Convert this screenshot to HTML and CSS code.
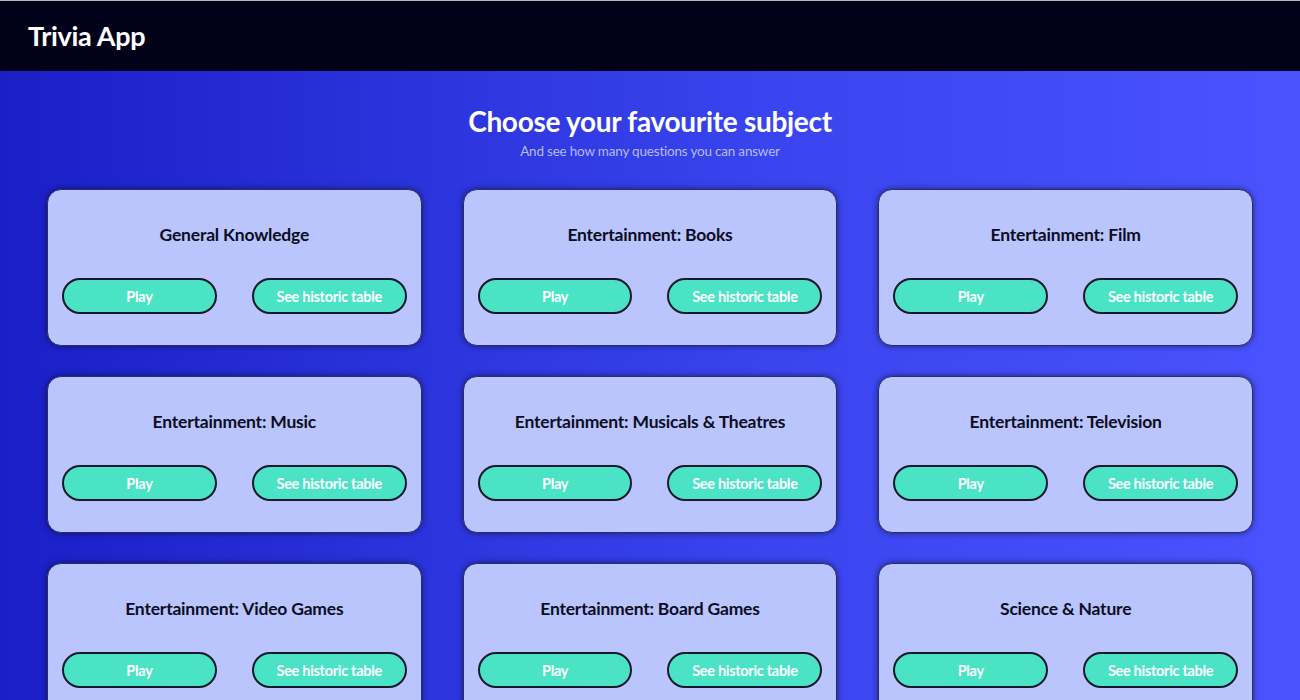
FILE: index.html
```html
<!DOCTYPE html>
<html lang="en">
<head>
<meta charset="utf-8">
<title>Trivia App</title>
<link rel="stylesheet" href="styles.css">
</head>
<body>
<header class="topbar">
  <div class="brand">Trivia App</div>
</header>
<main class="main">
  <section class="intro">
    <h1 class="intro-title">Choose your favourite subject</h1>
    <p class="intro-sub">And see how many questions you can answer</p>
  </section>
  <section class="grid">
    <div class="card"><h2 class="card-title">General Knowledge</h2><div class="actions"><button class="btn">Play</button><button class="btn">See historic table</button></div></div>
    <div class="card"><h2 class="card-title">Entertainment: Books</h2><div class="actions"><button class="btn">Play</button><button class="btn">See historic table</button></div></div>
    <div class="card"><h2 class="card-title">Entertainment: Film</h2><div class="actions"><button class="btn">Play</button><button class="btn">See historic table</button></div></div>
    <div class="card"><h2 class="card-title">Entertainment: Music</h2><div class="actions"><button class="btn">Play</button><button class="btn">See historic table</button></div></div>
    <div class="card"><h2 class="card-title">Entertainment: Musicals &amp; Theatres</h2><div class="actions"><button class="btn">Play</button><button class="btn">See historic table</button></div></div>
    <div class="card"><h2 class="card-title">Entertainment: Television</h2><div class="actions"><button class="btn">Play</button><button class="btn">See historic table</button></div></div>
    <div class="card"><h2 class="card-title">Entertainment: Video Games</h2><div class="actions"><button class="btn">Play</button><button class="btn">See historic table</button></div></div>
    <div class="card"><h2 class="card-title">Entertainment: Board Games</h2><div class="actions"><button class="btn">Play</button><button class="btn">See historic table</button></div></div>
    <div class="card"><h2 class="card-title">Science &amp; Nature</h2><div class="actions"><button class="btn">Play</button><button class="btn">See historic table</button></div></div>
  </section>
</main>
</body>
</html>
```
FILE: styles.css
```css
* { box-sizing: border-box; }
html, body { margin: 0; padding: 0; }
body {
  font-family: Lato, "Liberation Sans", sans-serif;
  background: linear-gradient(90deg, #1a1fc6 0%, #3a45ef 60%, #4a53fd 100%);
  min-height: 100vh;
}
.topbar {
  height: 71px;
  background: #01021a;
  border-top: 1px solid #b5b5b5;
  display: flex;
  align-items: center;
  padding-left: 28px;
}
.brand {
  color: #ffffff;
  font-weight: 700;
  font-size: 27px;
  letter-spacing: -0.3px;
  margin-top: -2px;
}
.main {
  padding: 0 47px;
}
.intro {
  text-align: center;
  padding-top: 33px;
}
.intro-title {
  margin: 0;
  color: #ffffff;
  font-size: 28px;
  font-weight: 700;
  line-height: 34px;
  letter-spacing: -0.3px;
}
.intro-sub {
  margin: 4px 0 0;
  color: #b3bdf8;
  font-size: 13.5px;
  line-height: 18px;
  letter-spacing: -0.2px;
}
.grid {
  margin-top: 29px;
  display: grid;
  grid-template-columns: repeat(3, 1fr);
  column-gap: 41px;
  row-gap: 30px;
}
.card {
  background: #b9c5fc;
  border: 1px solid #2a2d6a;
  border-radius: 14px;
  box-shadow: 0 0 6px rgba(0, 0, 20, 0.55);
  padding: 33px 14px 31px;
  display: flex;
  flex-direction: column;
  align-items: stretch;
}
.card-title {
  margin: 0;
  text-align: center;
  color: #0c0d22;
  font-size: 17.5px;
  font-weight: 700;
  line-height: 23px;
  letter-spacing: -0.2px;
}
.actions {
  margin-top: 32px;
  display: grid;
  grid-template-columns: 1fr 1fr;
  column-gap: 35px;
}
.btn {
  height: 36px;
  background: #4ae3c6;
  border: 2px solid #15172a;
  border-radius: 18px;
  color: #ffffff;
  font-family: Lato, "Liberation Sans", sans-serif;
  font-weight: 700;
  font-size: 14.5px;
  letter-spacing: -0.3px;
  cursor: pointer;
}
```
